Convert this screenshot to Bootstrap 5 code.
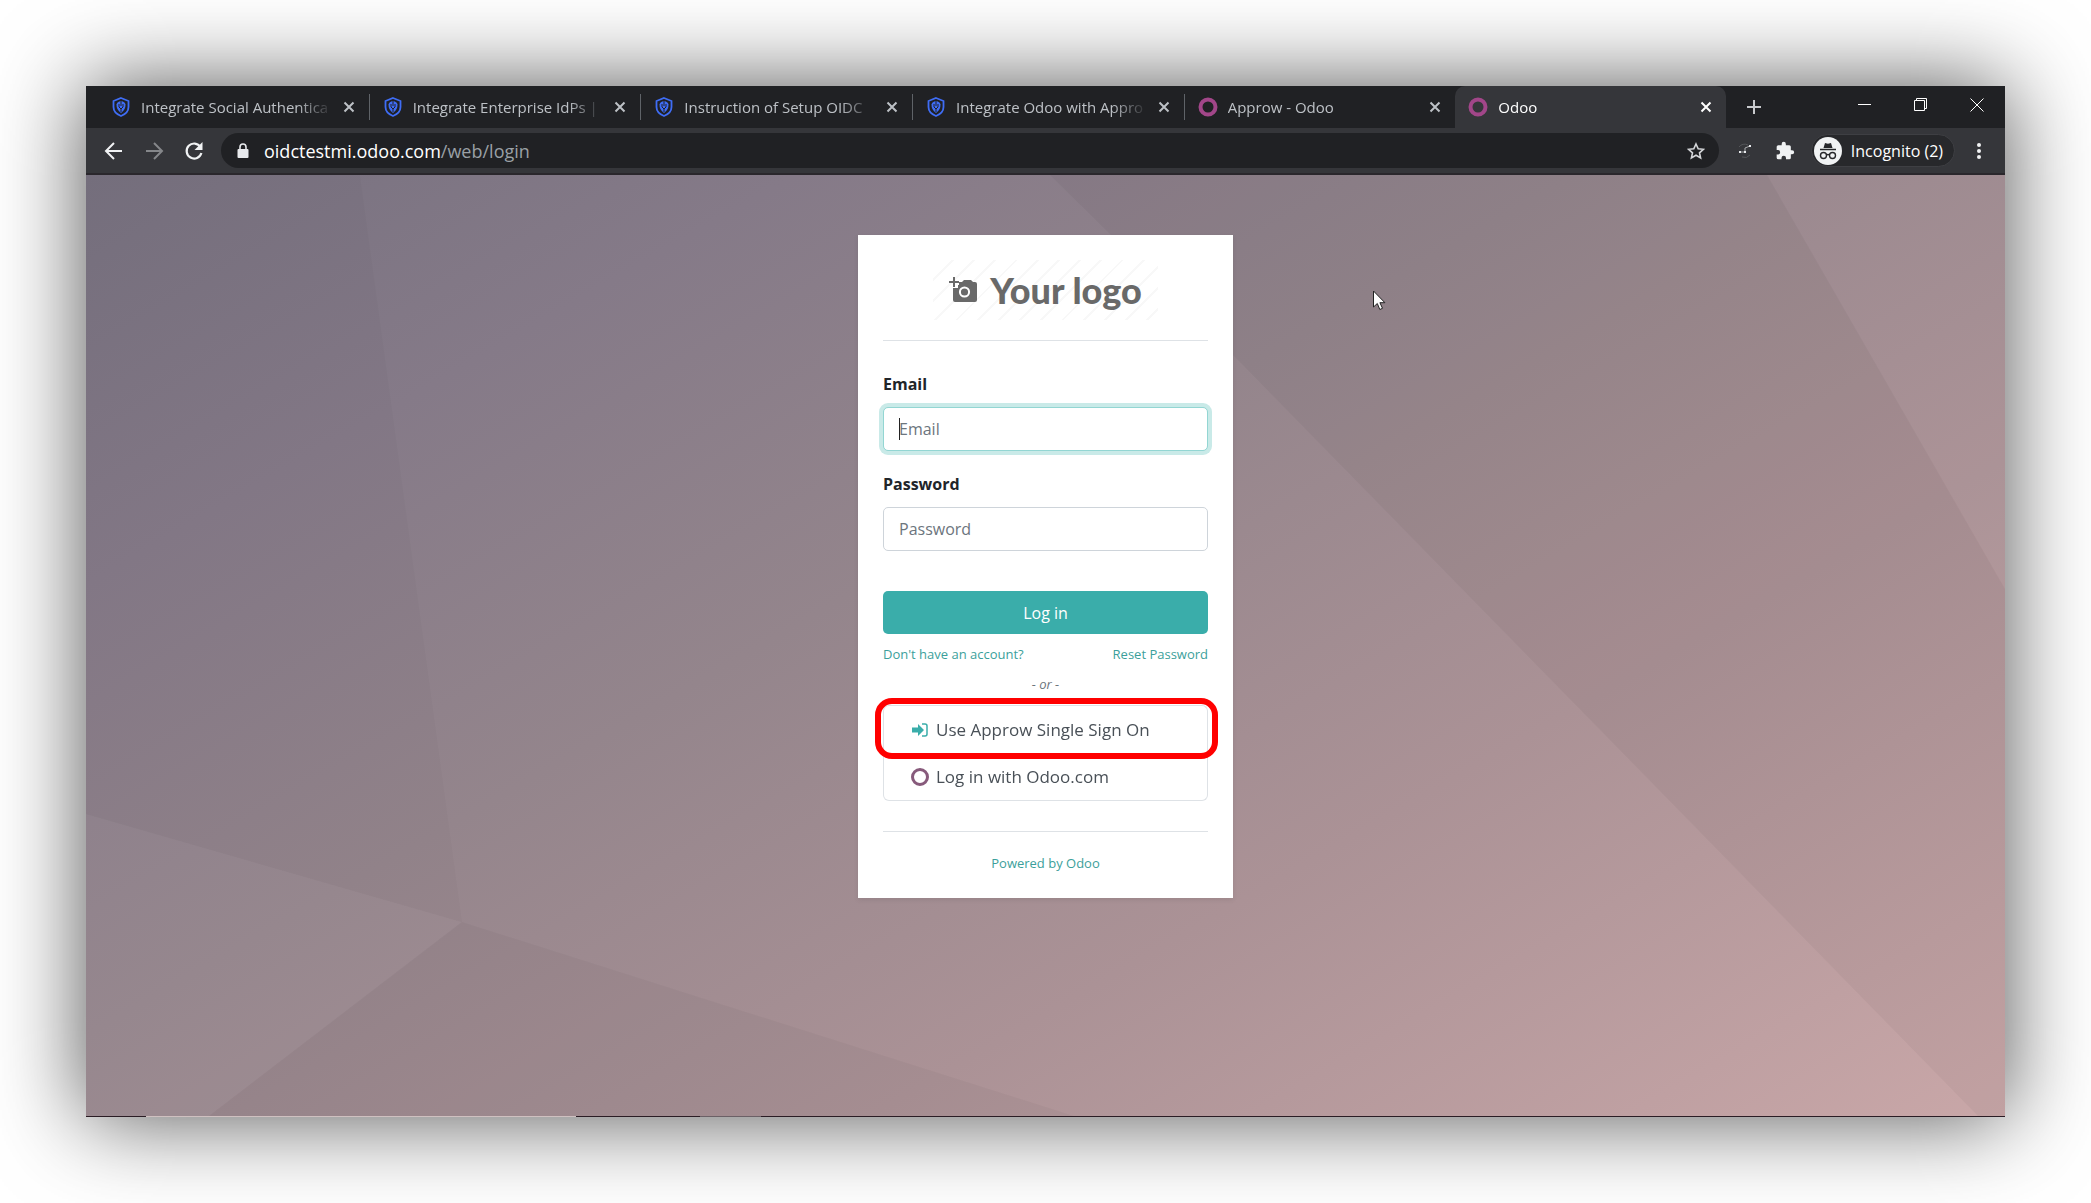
<!DOCTYPE html>
<html lang="en">
<head>
<meta charset="utf-8">
<meta name="viewport" content="width=device-width, initial-scale=1">
<title>Odoo</title>
<link href="https://cdn.jsdelivr.net/npm/bootstrap@5.3.0/dist/css/bootstrap.min.css" rel="stylesheet">
<style>
:root{--ui:"Open Sans","Noto Sans",sans-serif}
body{font-family:var(--ui);background:#fff;padding:86px;font-size:16px}
.browser{box-shadow:0 0 84px 2px rgba(0,0,0,.66)}
.tabstrip{background:#202124;height:42px;padding-left:12px}
.tabs{flex:0 1 1628px;min-width:0}
.tab{flex:1 1 0;min-width:0;color:#bdc1c6;padding:0 14px 0 13px;gap:10px;font-size:15px}
.tab .tab-name{flex:1;min-width:0;overflow:hidden;white-space:nowrap;line-height:24px;color:inherit;text-decoration:none;-webkit-mask-image:linear-gradient(90deg,#000 calc(100% - 36px),transparent);mask-image:linear-gradient(90deg,#000 calc(100% - 36px),transparent)}
.tab.split{border-right:1px solid;border-image:linear-gradient(transparent 20%,#5f6368 20%,#5f6368 80%,transparent 80%) 1}
.tab.current{background:#35363a;color:#fff;border-radius:10px 10px 0 0}
.plain{background:none;border:0;padding:0;color:inherit;display:inline-flex;align-items:center;justify-content:center}
.plain svg,.tab svg{display:block;flex:none}
.wincontrols{gap:40px;margin-right:20px;color:#fff}
.toolbar{background:#35363a;height:47px;border-bottom:2px solid #2a272c;color:#f1f3f4;padding:0 18px}
.navset{gap:20px;margin-right:17px}
.omni{background:#202124;border-radius:18px;height:35px;padding:0 14px 0 16px;gap:15px}
.omni .url{font-size:18px;line-height:24px;color:#9aa0a6}
.omni .url b{font-weight:400;color:#fff}
.actions{gap:20px;margin-left:16px}
.incog{background:#27282b;border:1px solid #3e3f43;border-radius:17px;height:33px;padding:0 11px 0 2px;gap:9px;font-size:16px}
.stage{background:linear-gradient(150deg,#77717f 0%,#857a88 20%,#94858c 42%,#ab9296 68%,#c9a7a8 100%);padding:60px 16px;overflow:hidden}
.facets{position:absolute;inset:0;width:100%;height:100%}
.signin{width:375px;padding:25px;border:0;border-radius:0;color:#212529;box-shadow:0 2px 5px rgba(0,0,0,.08)}
.brand{width:225px;height:60px;margin:0 auto;gap:13px;color:#696969;background:repeating-linear-gradient(135deg,#fff 0 13px,#f8f8f8 13px 15px);font:900 36px/56px Lato,sans-serif;white-space:nowrap}
.rule{margin:20px 0 0;border-top:1px solid #dee2e6;opacity:1}
.fields{margin-top:30px}
.signin .form-label{font-weight:700;line-height:26px;margin:0 0 10px;font-size:16px}
.signin .form-control{font-size:16px;height:44px;padding:8px 15px;border-radius:5px;border-color:#ced4da}
.signin .form-control::placeholder{color:#6c757d}
.signin .form-control:focus{border-color:#93d6d3;box-shadow:0 0 0 4px #c9eae8;caret-color:transparent}
.caret{position:absolute;left:16px;bottom:11px;width:1px;height:22px;background:#222}
.go{background:#3aadaa;border:0;color:#fff;height:43px;border-radius:5px;font-size:16px;margin-top:40px}
.go:hover{background:#359d9a;color:#fff}
.tiny{font-size:13px;line-height:20px}
.tiny a,a.tiny{color:#3c9f9b;text-decoration:none}
.extras{margin-top:10px}
.providers{margin-top:11px}
.providers .list-group-item{font-size:17px;line-height:26px;padding:10px 27px;height:48px;color:#495057;border-color:#dee2e6;gap:7px}
.providers .list-group-item:first-child{border-bottom:0}
.marker{position:absolute;left:-8px;right:-10px;top:-7px;height:61px;border:6px solid #f00;border-radius:17px;z-index:3;pointer-events:none}
.foot{margin-top:30px}
.powered{margin-top:21px}
.pointer{position:absolute;left:67%;top:115px}
.dock{height:1px;background:linear-gradient(90deg,#2a1c24 60px,#cfc0c0 60px 490px,#2a1c24 490px 614px,#6b6066 614px 675px,#2a1c24 675px)}
</style>
</head>
<body class="d-flex flex-column min-vh-100">
<svg width="0" height="0" class="position-absolute" aria-hidden="true">
<symbol id="shield" viewBox="0 0 18 20"><path d="M9 1 16.500 4v6q0 6-7.500 9Q1.500 16 1.500 10V4z" fill="none" stroke="#3f6df5" stroke-width="1.800"/><path d="M9 4q4 .5 4.500 3.500.3 5-4.500 8.500-4.800-3.500-4.500-8.500Q5 4.500 9 4z" fill="#3f6df5"/><path d="M9 4v5M7 7v3l2 2 2-2V7M9 12v3" stroke="#202124" stroke-width="1" fill="none"/></symbol>
<symbol id="ring" viewBox="0 0 20 20"><circle cx="10" cy="10" r="7.500" fill="none" stroke="#a24689" stroke-width="4"/></symbol>
<symbol id="cross" viewBox="0 0 12 12"><path d="m1.500 1.500 9 9m0-9-9 9" stroke="currentColor" stroke-width="2"/></symbol>
</svg>
<main class="browser d-flex flex-column flex-grow-1">
<header>
<div class="tabstrip d-flex align-items-stretch">
<nav class="tabs d-flex" aria-label="Open tabs">
<div class="tab split d-flex align-items-center"><svg width="20" height="20"><use href="#shield"/></svg><a class="tab-name" href="#">Integrate Social Authentica</a><button class="plain" aria-label="Close tab"><svg width="12" height="12"><use href="#cross"/></svg></button></div>
<div class="tab split d-flex align-items-center"><svg width="20" height="20"><use href="#shield"/></svg><a class="tab-name" href="#">Integrate Enterprise IdPs |</a><button class="plain" aria-label="Close tab"><svg width="12" height="12"><use href="#cross"/></svg></button></div>
<div class="tab split d-flex align-items-center"><svg width="20" height="20"><use href="#shield"/></svg><a class="tab-name" href="#">Instruction of Setup OIDC</a><button class="plain" aria-label="Close tab"><svg width="12" height="12"><use href="#cross"/></svg></button></div>
<div class="tab split d-flex align-items-center"><svg width="20" height="20"><use href="#shield"/></svg><a class="tab-name" href="#">Integrate Odoo with Appro</a><button class="plain" aria-label="Close tab"><svg width="12" height="12"><use href="#cross"/></svg></button></div>
<div class="tab d-flex align-items-center"><svg width="20" height="20"><use href="#ring"/></svg><a class="tab-name" href="#">Approw - Odoo</a><button class="plain" aria-label="Close tab"><svg width="12" height="12"><use href="#cross"/></svg></button></div>
<div class="tab current d-flex align-items-center"><svg width="20" height="20"><use href="#ring"/></svg><a class="tab-name" href="#">Odoo</a><button class="plain" aria-label="Close tab"><svg width="12" height="12"><use href="#cross"/></svg></button></div>
</nav>
<button class="plain ms-3 ps-1" aria-label="New tab"><svg width="16" height="16"><path d="M8 1v14M1 8h14" stroke="#c8cacd" stroke-width="2"/></svg></button>
<div class="wincontrols d-flex ms-auto pb-1">
<button class="plain" aria-label="Minimize"><svg width="16" height="16"><path d="M1 7.500h13" stroke="#fff"/></svg></button>
<button class="plain" aria-label="Restore"><svg width="16" height="16"><path d="M1.500 3.500h10v10h-10zM3.500 3V1.500h10v10H12" fill="none" stroke="#fff"/></svg></button>
<button class="plain" aria-label="Close"><svg width="16" height="16"><path d="m1.500 1.500 13 13m0-13-13 13" stroke="#fff"/></svg></button>
</div>
</div>
<div class="toolbar d-flex align-items-center">
<div class="navset d-flex">
<button class="plain" aria-label="Back"><svg width="20" height="20" fill="none" stroke="#f1f3f4" stroke-width="2"><path d="M18 10H3m7-8-8 8 8 8"/></svg></button>
<button class="plain" aria-label="Forward"><svg width="20" height="20" fill="none" stroke="#85878a" stroke-width="2"><path d="M2 10h15m-7-8 8 8-8 8"/></svg></button>
<button class="plain" aria-label="Reload"><svg width="20" height="20"><path d="M16.500 6A7.500 7.500 0 1 0 17.400 12" fill="none" stroke="#f1f3f4" stroke-width="2.200"/><path d="M18.500 1v8h-8z" fill="#f1f3f4"/></svg></button>
</div>
<div class="omni d-flex align-items-center flex-grow-1">
<svg width="12" height="16"><path d="M3 7V4a3 3 0 0 1 6 0v3" fill="none" stroke="#e8eaed" stroke-width="1.600"/><rect x=".5" y="6" width="11" height="9" rx="1" fill="#e8eaed"/></svg>
<span class="url flex-grow-1"><b>oidctestmi.odoo.com</b>/web/login</span>
<button class="plain" aria-label="Bookmark"><svg width="18" height="18"><path d="m9 2 2.200 4.800 5.200.5-3.900 3.500 1.100 5.200L9 13.300 4.400 16l1.100-5.200L1.600 7.300l5.200-.5z" fill="none" stroke="#d5d7da" stroke-width="1.600"/></svg></button>
</div>
<div class="actions d-flex align-items-center">
<svg class="flex-shrink-0" width="20" height="18" fill="none"><path d="M4 5a7 7 0 0 1 9-2M15 13a7 7 0 0 1-8 2" stroke="#55575a"/><path d="M4 10h6m0 0V6l5-2" stroke="#a8aaac"/><path d="M4 9h2v2H4zm5 0h2v2H9zm5-6h2v2h-2z" fill="#e8eaed"/></svg>
<button class="plain" aria-label="Extensions"><svg width="20" height="20" viewBox="0 0 24 24"><path fill="#f1f3f4" d="M20.500 11H19V7a2 2 0 0 0-2-2h-4V3.500a2.500 2.500 0 0 0-5 0V5H4a2 2 0 0 0-2 2v3.800h1.500a2.700 2.700 0 0 1 0 5.400H2V20a2 2 0 0 0 2 2h3.800v-1.500a2.700 2.700 0 0 1 5.400 0V22H17a2 2 0 0 0 2-2v-4h1.500a2.500 2.500 0 0 0 0-5z"/></svg></button>
</div>
<button class="plain incog text-white ms-3"><svg width="28" height="28"><circle cx="14" cy="14" r="14" fill="#f1f3f4"/><path d="M6 12.500h16" stroke="#27282b" stroke-width="1.500"/><path d="m9.500 11 1.500-5 3 .8L17 6l1.500 5z" fill="#27282b"/><g fill="none" stroke="#27282b" stroke-width="1.400"><circle cx="9.500" cy="18.500" r="3"/><circle cx="18.500" cy="18.500" r="3"/><path d="M12.500 18q1.500-1 3 0"/></g></svg>Incognito (2)</button>
<button class="plain ms-3" aria-label="Menu"><svg width="16" height="20" fill="#f1f3f4"><circle cx="8" cy="4" r="2"/><circle cx="8" cy="10" r="2"/><circle cx="8" cy="16" r="2"/></svg></button>
</div>
</header>
<section class="stage position-relative d-flex justify-content-center align-items-start flex-grow-1">
<svg class="facets" viewBox="0 0 1919 941" preserveAspectRatio="none" aria-hidden="true">
<path d="M0 0H274L376 747 0 639z" fill="#000" opacity=".02"/>
<path d="M0 639 376 747 123 941H0z" fill="#fff" opacity=".02"/>
<path d="M376 747 988 941H123z" fill="#000" opacity=".03"/>
<path d="M964 0h717l238 414v527h-27L1152 185z" fill="#000" opacity=".035"/>
<path d="M1681 0h238v414z" fill="#fff" opacity=".01"/>
</svg>
<form class="signin card">
<div class="brand d-flex align-items-center justify-content-center"><svg width="28" height="27" viewBox="0 0 28 27"><path fill="#696969" d="M10 5h3l2-2h7l2 2h2q2 0 2 2v16q0 2-2 2H6q-2 0-2-2V11h5V8h1z"/><circle cx="15.500" cy="15" r="4.600" fill="none" stroke="#fff" stroke-width="2"/><path d="M5 0v10M0 5h10" stroke="#696969" stroke-width="2"/></svg><span>Your logo</span></div>
<hr class="rule">
<div class="fields position-relative">
<label class="form-label" for="email">Email</label>
<input class="form-control" id="email" type="email" placeholder="Email" autofocus>
<span class="caret"></span>
</div>
<div class="mt-3 pt-1">
<label class="form-label" for="password">Password</label>
<input class="form-control" id="password" type="password" placeholder="Password">
</div>
<button class="btn go w-100" type="button">Log in</button>
<div class="tiny extras d-flex justify-content-between"><a href="#">Don't have an account?</a><a href="#">Reset Password</a></div>
<em class="tiny extras text-center text-secondary">- or -</em>
<div class="providers position-relative">
<div class="list-group">
<a href="#" class="list-group-item d-flex align-items-center"><svg width="18" height="16" viewBox="0 0 18 16"><path d="M1 5.500h6V2l6 6-6 6v-3.500H1z" fill="#3aadaa"/><path d="M11 2h3q2 0 2 2v8q0 2-2 2h-3" fill="none" stroke="#3aadaa" stroke-width="1.500"/></svg>Use Approw Single Sign On</a>
<a href="#" class="list-group-item d-flex align-items-center"><svg width="18" height="18"><circle cx="9" cy="9" r="7.500" fill="none" stroke="#875a7b" stroke-width="3"/></svg>Log in with Odoo.com</a>
</div>
<span class="marker"></span>
</div>
<hr class="rule foot">
<a href="#" class="tiny powered text-center">Powered by Odoo</a>
</form>
<svg class="pointer" width="14" height="22"><path d="M1.500 1v16l3.800-3.500 2.500 6 2.700-1.200-2.600-5.600h5z" fill="#fff" stroke="#222"/></svg>
</section>
<div class="dock"></div>
</main>
<script src="https://cdn.jsdelivr.net/npm/bootstrap@5.3.0/dist/js/bootstrap.bundle.min.js"></script>
</body>
</html>
